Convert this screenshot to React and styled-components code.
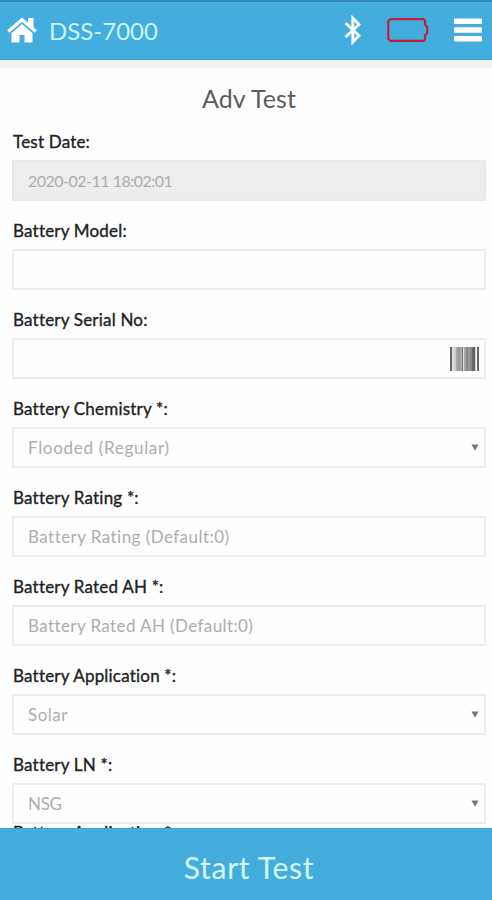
import React from 'react';
import styled, { createGlobalStyle } from 'styled-components';

const GlobalStyle = createGlobalStyle`
  * {
    box-sizing: border-box;
  }
  body {
    margin: 0;
    background: #fefefe;
    font-family: Lato, 'Open Sans', sans-serif;
    font-variant-ligatures: none;
  }
`;

const Screen = styled.div`
  height: 100vh;
  display: flex;
  flex-direction: column;
  overflow: hidden;
`;

const Header = styled.header`
  flex: none;
  height: 60px;
  display: flex;
  align-items: center;
  padding: 0 10px 1px 7px;
  background: #43aedd;
  border-top: 2px solid #3088b5;
  border-bottom: 1px solid #3da3cf;
  color: #fff;
`;

const Brand = styled.div`
  flex: 1;
  margin-left: 12px;
  padding-top: 1px;
  font-size: 24px;
  line-height: 30px;
  color: #c9f5fc;
`;

const HeaderIcons = styled.div`
  display: flex;
  align-items: center;
  gap: 25px;
`;

const Divider = styled.div`
  flex: none;
  height: 8px;
  background: linear-gradient(#dff4fa, #f1f3f3 3px, #f3f3f3);
`;

const Content = styled.main`
  flex: 1;
  min-height: 0;
  overflow: hidden;
  padding: 0 6px 0 12px;
`;

const Title = styled.h1`
  margin: 14px 0 16px;
  font-size: 25px;
  font-weight: 400;
  line-height: 33px;
  letter-spacing: 0.1px;
  text-align: center;
  color: #5c5c5c;
`;

const Field = styled.div`
  margin-bottom: ${(p) => (p.$last ? -2 : 19)}px;
`;

const Label = styled.div`
  padding: 1px 0 0 1px;
  margin-bottom: 8px;
  font-size: 17px;
  line-height: 20px;
  letter-spacing: 0.2px;
  -webkit-text-stroke: 0.35px #222;
  white-space: nowrap;
  color: #222;
`;

const Control = styled.div`
  height: 41px;
  display: flex;
  align-items: center;
  justify-content: space-between;
  padding: 0 5px 0 14px;
  border: 2px solid ${(p) => (p.$disabled ? '#e9e9e9' : '#eee')};
  background: ${(p) => (p.$disabled ? '#ededed' : '#fefefe')};
  font-size: ${(p) => (p.$disabled ? 16 : 17)}px;
  letter-spacing: ${(p) => p.$spacing || 0}px;
  white-space: nowrap;
  color: #adadad;
`;

const StartButton = styled.button`
  flex: none;
  height: 72px;
  padding: 5px 0 0 6px;
  border: 0;
  border-top: 1px solid #3ca4d2;
  background: #43aedd;
  font-family: inherit;
  font-size: 30px;
  letter-spacing: 0.7px;
  color: #d5f8fe;
`;

const Home = () => (
  <svg width="30" height="26" viewBox="0 0 30 26" fill="#fff">
    <path d="M1.2 14.5 15 2.8l13.8 11.7" fill="none" stroke="#fff" strokeWidth="3.4" />
    <path d="M21 1h5.500v12L21 7.500z" />
    <path d="M4.5 16 15 7l10.5 9v8.5q0 1-1 1H17.500V18h-5v7.5h-7q-1 0-1-1z" />
    <path d="M3 16.300 15 6.200l12 10.100" fill="none" stroke="#43aedd" strokeWidth="0.8" />
  </svg>
);

const Bluetooth = () => (
  <svg width="18" height="30" viewBox="0 0 18 30" fill="none">
    <path
      d="M1.500 8 15 20.500 8.800 27V3L15 9.500 1.500 22"
      stroke="#fff"
      strokeWidth="2.8"
    />
  </svg>
);

const Battery = () => (
  <svg width="42" height="24" viewBox="0 0 42 24" fill="none">
    <path
      d="M3.500 1.200h33l1.500 1.300v4l2.200 2.500v6l-2.200 2.500v4l-1.500 1.300h-33L1.300 21V3z"
      stroke="#c01f3c"
      strokeWidth="2.2"
      strokeLinejoin="round"
    />
  </svg>
);

const Menu = () => (
  <svg width="28" height="24" viewBox="0 0 28 24" fill="#fff">
    <rect y="0.5" width="28" height="5.5" rx="1" />
    <rect y="9.3" width="28" height="5.5" rx="1" />
    <rect y="18" width="28" height="5.5" rx="1" />
  </svg>
);

// [x, width, shade] of each bar
const bars = [
  [0, 2, '#666'],
  [2, 2, '#ddd'],
  [4, 2, '#ccc'],
  [6, 2, '#aaa'],
  [8, 2, '#999'],
  [10, 2, '#aaa'],
  [12, 1, '#777'],
  [13, 1, '#ddd'],
  [14, 2, '#aaa'],
  [16, 2, '#888'],
  [18, 2, '#999'],
  [20, 2, '#888'],
  [22, 3, '#666'],
  [25, 1, '#ccc'],
  [27, 2, '#666'],
];

const Barcode = () => (
  <svg width="29" height="24" viewBox="0 0 29 24">
    {bars.map(([x, w, fill]) => (
      <rect key={x} x={x} width={w} height="24" fill={fill} />
    ))}
  </svg>
);

const Arrow = () => (
  <svg width="8" height="7" viewBox="0 0 8 7">
    <path d="M0.5 0.5h7L4 6.8z" fill="#777" />
  </svg>
);

const fields = [
  { label: 'Test Date:', value: '2020-02-11 18:02:01', spacing: -0.5, disabled: true },
  { label: 'Battery Model:' },
  { label: 'Battery Serial No:', icon: <Barcode /> },
  { label: 'Battery Chemistry *:', value: 'Flooded (Regular)', spacing: 0.7, icon: <Arrow /> },
  { label: 'Battery Rating *:', value: 'Battery Rating (Default:0)', spacing: 0.45 },
  { label: 'Battery Rated AH *:', value: 'Battery Rated AH (Default:0)', spacing: 0.4 },
  { label: 'Battery Application *:', value: 'Solar', spacing: 0.5, icon: <Arrow /> },
  { label: 'Battery LN *:', value: 'NSG', spacing: -0.3, icon: <Arrow /> },
];

function App() {
  return (
    <Screen>
      <GlobalStyle />
      <Header>
        <Home />
        <Brand>DSS-7000</Brand>
        <HeaderIcons>
          <Bluetooth />
          <Battery />
          <Menu />
        </HeaderIcons>
      </Header>
      <Divider />
      <Content>
        <Title>Adv Test</Title>
        {fields.map((f, i) => (
          <Field key={f.label} $last={i === fields.length - 1}>
            <Label>{f.label}</Label>
            <Control $disabled={f.disabled} $spacing={f.spacing}>
              <span>{f.value}</span>
              {f.icon}
            </Control>
          </Field>
        ))}
        <Label>Battery Application *:</Label>
      </Content>
      <StartButton>Start Test</StartButton>
    </Screen>
  );
}

export default App;
